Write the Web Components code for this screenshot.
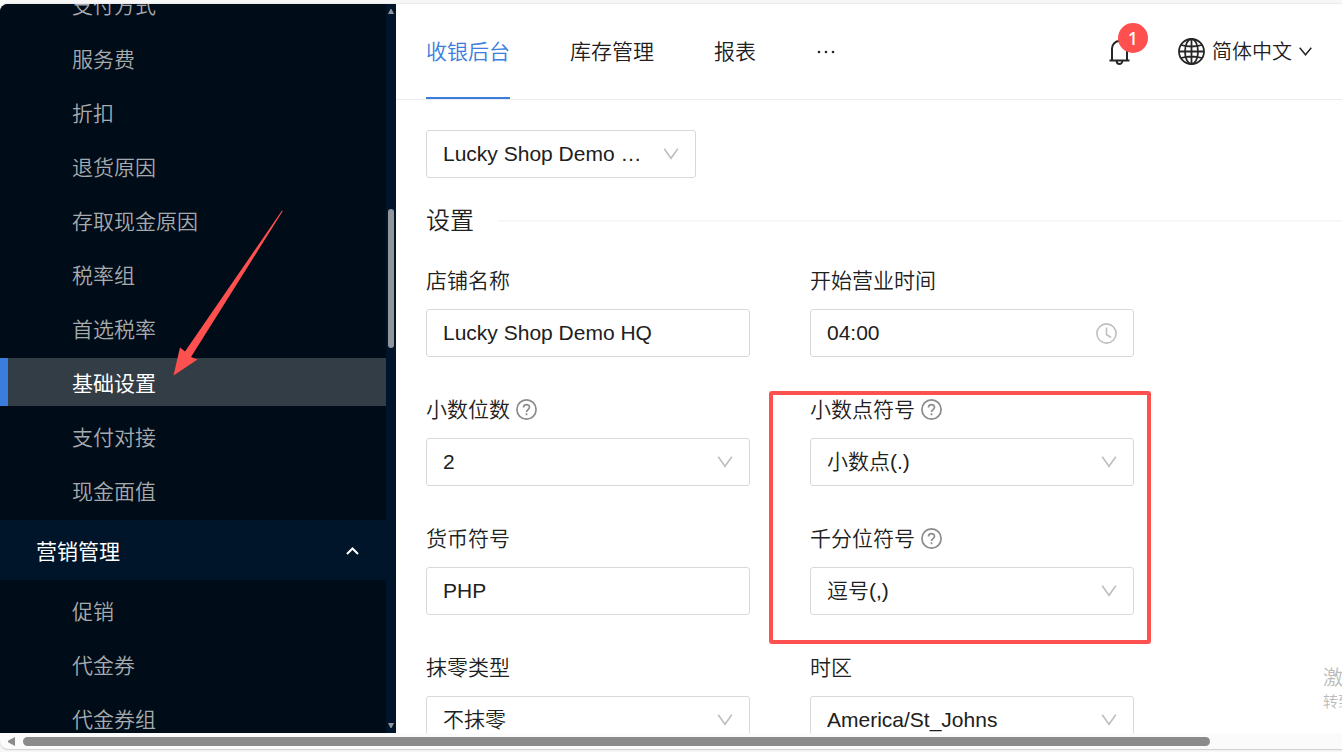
<!DOCTYPE html>
<html lang="zh-CN">
<head>
<meta charset="utf-8">
<title>基础设置</title>
<style>
    body {
        margin: 0;
        height: 100vh;
        overflow: hidden;
        background: #f7f7f7;
        color: #202020;
        font: 350 21px/32px "Liberation Sans", "Noto Sans CJK SC", sans-serif;
        --primary: #3b7ddd;
        --mark: #ff5050;
        --line: #d9d9d9;
    }
</style>
</head>
<body>

<app-shell>
    <side-menu slot="side">
        <menu-group>
            <menu-item>支付方式</menu-item>
            <menu-item>服务费</menu-item>
            <menu-item>折扣</menu-item>
            <menu-item>退货原因</menu-item>
            <menu-item>存取现金原因</menu-item>
            <menu-item>税率组</menu-item>
            <menu-item>首选税率</menu-item>
            <menu-item active>基础设置</menu-item>
            <menu-item>支付对接</menu-item>
            <menu-item>现金面值</menu-item>
        </menu-group>
        <menu-group label="营销管理">
            <menu-item>促销</menu-item>
            <menu-item>代金券</menu-item>
            <menu-item>代金券组</menu-item>
        </menu-group>
    </side-menu>

    <top-bar slot="top" count="1" lang-name="简体中文">
        <nav-tab active>收银后台</nav-tab>
        <nav-tab>库存管理</nav-tab>
        <nav-tab>报表</nav-tab>
    </top-bar>

    <drop-select name="店铺" value="Lucky Shop Demo HQ" style="width: 270px"></drop-select>

    <form-section heading="设置">
        <form-field label="店铺名称" value="Lucky Shop Demo HQ"></form-field>
        <form-field label="开始营业时间" value="04:00" type="time"></form-field>
        <form-field label="小数位数" value="2" type="select" help></form-field>
        <form-field label="小数点符号" value="小数点(.)" type="select" help></form-field>
        <form-field label="货币符号" value="PHP"></form-field>
        <form-field label="千分位符号" value="逗号(,)" type="select" help></form-field>
        <form-field label="抹零类型" value="不抹零" type="select"></form-field>
        <form-field label="时区" value="America/St_Johns" type="select"></form-field>
        <mark-box slot="mark"></mark-box>
    </form-section>

    <mark-arrow slot="over"></mark-arrow>
    <os-notice slot="over"></os-notice>
</app-shell>

<script>
// small helper, every element puts its markup in an open shadow root
class Base extends HTMLElement {
    constructor() {
        super();
        this.attachShadow({ mode: "open" });
    }
    connectedCallback() {
        this.shadowRoot.innerHTML = this.render();
    }
    attr(name) {
        return this.getAttribute(name) || "";
    }
}

// window frame: sidebar, header, content and the bottom scroll bar
class AppShell extends Base {
    render() {
        return `
<style>
    :host { display: flex; flex-direction: column; box-sizing: border-box; height: 100%; padding: 4px 0 3px; position: relative; overflow: hidden; }
    .body { display: flex; flex: 1; min-height: 0; background: #fff; border-radius: 8px 0 0 0; overflow: hidden; box-shadow: 0 0 2px #ccc; }
    .right { flex: 1; min-width: 0; display: flex; flex-direction: column; overflow: hidden; }
    main { display: flex; flex-direction: column; gap: 25px; padding: 30px 0 0 30px; }
    .bar { display: flex; align-items: center; gap: 8px; box-sizing: border-box; height: 16px; padding-left: 8px; background: #fbfbfb; border-radius: 0 0 0 8px; box-shadow: 0 1px 1px #ccc; }
    .bar svg { width: 7px; height: 9px; }
    .track { flex: 1; }
    .thumb { width: 90%; height: 9px; border-radius: 5px; background: #8b8b8b; }
</style>
<div class="body">
    <slot name="side"></slot>
    <div class="right">
        <slot name="top"></slot>
        <main><slot></slot></main>
    </div>
</div>
<div class="bar">
    <svg viewBox="0 0 7 9"><path d="M7 0v9L0 5.2v-1.4z" fill="#8b8b8b"/></svg>
    <div class="track"><div class="thumb"></div></div>
</div>
<slot name="over"></slot>`;
    }
}
customElements.define("app-shell", AppShell);

class SideMenu extends Base {
    render() {
        return `
<style>
    :host { display: flex; flex: none; width: 396px; background: #001529; overflow: hidden; }
    nav { flex: 1; margin-top: -30px; }
    .scroll { display: flex; flex-direction: column; align-items: center; width: 10px; padding: 5px 0; }
    .scroll svg { width: 6px; height: 5px; }
    .space { flex: 195; }
    .thumb { flex: 139; width: 6px; border-radius: 3px; background: #90959c; }
    .rest { flex: 375; }
</style>
<nav><slot></slot></nav>
<div class="scroll">
    <svg viewBox="0 0 6 5"><path d="M0 5h6L3.5 0h-1z" fill="#90959c"/></svg>
    <div class="space"></div>
    <div class="thumb"></div>
    <div class="rest"></div>
    <svg viewBox="0 0 6 5"><path d="M0 0h6L3.5 5h-1z" fill="#90959c"/></svg>
</div>`;
    }
}
customElements.define("side-menu", SideMenu);

class MenuGroup extends Base {
    render() {
        const head = this.attr("label") ? `
<button type="button" aria-expanded="true">${this.attr("label")}
    <svg viewBox="0 0 13 8"><path d="M1 7l5.500-5.500L12 7" fill="none" stroke="#fff" stroke-width="2"/></svg>
</button>` : "";
        return `
<style>
    :host { display: block; }
    button { display: flex; justify-content: space-between; align-items: center; width: 100%; height: 60px; padding: 3px 27px 0 36px; border: 0; background: #001529; color: #fff; font: inherit; font-weight: 400; }
    svg { width: 13px; height: 8px; margin-bottom: 2px; }
    .items { display: flex; flex-direction: column; gap: 6px; padding: 6px 0; background: #000c17; }
</style>
${head}
<div class="items"><slot></slot></div>`;
    }
}
customElements.define("menu-group", MenuGroup);

class MenuItem extends Base {
    render() {
        return `
<style>
    :host { display: block; }
    a { display: flex; align-items: center; box-sizing: border-box; height: 48px; padding: 4px 0 0 64px; border-left: 8px solid transparent; color: #a6aaae; text-decoration: none; }
    :host([active]) a { border-color: var(--primary); background: #333d45; color: #fff; font-weight: 400; }
</style>
<a href="#"><slot></slot></a>`;
    }
}
customElements.define("menu-item", MenuItem);

class TopBar extends Base {
    render() {
        return `
<style>
    :host { display: flex; flex: none; justify-content: space-between; box-sizing: border-box; height: 96px; padding: 0 30px; border-bottom: 1px solid #ebebeb; }
    nav, .tools { display: flex; }
    nav { gap: 60px; }
    .tools { align-items: center; gap: 48px; }
    button { display: flex; align-items: center; padding: 0; border: 0; background: none; color: inherit; font: inherit; }
    .more svg { width: 20px; height: 4px; }
    .bell { position: relative; }
    .bell svg { width: 21px; height: 26px; }
    .badge { position: absolute; left: 9px; top: -16px; width: 30px; height: 30px; border-radius: 50%; background: var(--mark); color: #fff; font: 500 18px/30px "Noto Sans", sans-serif; text-align: center; }
    .lang { gap: 7px; font-size: 20px; }
    .globe { width: 27px; height: 27px; }
    .down { width: 13px; height: 9px; }
</style>
<nav>
    <slot></slot>
    <button class="more" type="button" aria-label="更多">
        <svg viewBox="0 0 20 4" fill="#262626"><circle cx="3" cy="2" r="1.300"/><circle cx="10" cy="2" r="1.300"/><circle cx="17" cy="2" r="1.300"/></svg>
    </button>
</nav>
<div class="tools">
    <button class="bell" type="button" aria-label="通知">
        <svg viewBox="0 0 21 26" fill="none" stroke="#262626" stroke-width="2">
            <path d="M0.500 21.500h20M3 21.500V9.500a7.500 7.500 0 0 1 15 0v12M10.500 2V0"/>
            <path d="M7.700 22a2.800 3 0 0 0 5.600 0"/>
        </svg>
        <span class="badge">${this.attr("count")}</span>
    </button>
    <button class="lang" type="button">
        <svg class="globe" viewBox="0 0 27 27" fill="none" stroke="#262626" stroke-width="1.800">
            <circle cx="13.500" cy="13.500" r="12.500"/>
            <ellipse cx="13.500" cy="13.500" rx="6.500" ry="12.500"/>
            <path d="M13.500 1v25M1 13.500h25M3 7q10.500 3 21 0M3 20q10.500-3 21 0"/>
        </svg>
        <span>${this.attr("lang-name")}</span>
        <svg class="down" viewBox="0 0 13 9"><path d="M0.700 0.700l5.800 7 5.800-7" fill="none" stroke="#262626" stroke-width="1.500"/></svg>
    </button>
</div>`;
    }
}
customElements.define("top-bar", TopBar);

class NavTab extends Base {
    render() {
        return `
<style>
    :host { display: flex; }
    a { display: flex; align-items: center; padding-top: 2px; border-bottom: 2px solid transparent; color: inherit; text-decoration: none; white-space: nowrap; }
    :host([active]) a { border-color: var(--primary); color: var(--primary); }
</style>
<a href="#"><slot></slot></a>`;
    }
}
customElements.define("nav-tab", NavTab);

// shared look of inputs and selects
const controlStyle = `
    .box { display: grid; align-items: center; }
    .box > * { grid-area: 1 / 1; }
    .box svg { justify-self: end; margin-right: 17px; pointer-events: none; }
    input, select { appearance: none; box-sizing: border-box; width: 100%; min-width: 0; height: 48px; margin: 0; padding: 0 16px; border: 1px solid var(--line); border-radius: 3px; background: #fff; color: inherit; font: inherit; outline: 0; }
    select { padding-right: 45px; text-overflow: ellipsis; }
    .arrow { width: 16px; height: 12px; }
    .clock { width: 21px; height: 21px; }
`;
const arrowIcon = `<svg class="arrow" viewBox="0 0 16 12"><path d="M1.200 0.700l6.800 9.600 6.800-9.600" fill="none" stroke="#bfbfbf" stroke-width="1.600"/></svg>`;
const clockIcon = `<svg class="clock" viewBox="0 0 21 21" fill="none" stroke="#bfbfbf" stroke-width="1.600"><circle cx="10.500" cy="10.500" r="9.600"/><path d="M10.500 4.500v7l4.500 3"/></svg>`;
const helpIcon = `<svg class="help" viewBox="0 0 21 21" fill="none" stroke="#8c8c8c" stroke-width="1.700"><circle cx="10.500" cy="10.500" r="9.600"/><path d="M7.500 8.600C7.500 4.500 13.500 4.700 13.500 8.300c0 2.400-3 2.200-3 4.700"/><path d="M10.500 14.300v1.900"/></svg>`;

class DropSelect extends Base {
    render() {
        return `
<style>
    :host { display: block; }
    ${controlStyle}
</style>
<div class="box">
    <select aria-label="${this.attr("name")}"><option>${this.attr("value")}</option></select>
    ${arrowIcon}
</div>`;
    }
}
customElements.define("drop-select", DropSelect);

class FormField extends Base {
    render() {
        const type = this.attr("type");
        const value = this.attr("value");
        let control = `<input id="control" type="text" value="${value}">`;
        if (type == "select") {
            control = `<select id="control"><option>${value}</option></select>${arrowIcon}`;
        } else if (type == "time") {
            control += clockIcon;
        }
        return `
<style>
    :host { display: flex; flex-direction: column; gap: 12px; }
    .title { display: flex; align-items: center; gap: 6px; }
    .help { width: 21px; height: 21px; padding-bottom: 1px; }
    ${controlStyle}
</style>
<div class="title">
    <label for="control">${this.attr("label")}</label>
    ${this.hasAttribute("help") ? helpIcon : ""}
</div>
<div class="box">${control}</div>`;
    }
}
customElements.define("form-field", FormField);

class FormSection extends Base {
    render() {
        return `
<style>
    :host { display: block; }
    h2 { display: flex; align-items: center; gap: 24px; margin: 0 0 26px; font-size: 24px; line-height: 36px; font-weight: inherit; }
    h2::after { content: ""; flex: 1; height: 2px; background: #f7f7f7; }
    .grid { position: relative; display: grid; grid-template-columns: repeat(auto-fill, 324px); max-width: 800px; gap: 37px 60px; }
</style>
<h2>${this.attr("heading")}</h2>
<div class="grid"><slot></slot><slot name="mark"></slot></div>`;
    }
}
customElements.define("form-section", FormSection);

// red frame round the separator fields
class MarkBox extends Base {
    render() {
        return `
<style>
    :host { position: absolute; left: 343px; top: 126px; width: 382px; height: 253px; box-sizing: border-box; border: 4px solid var(--mark); border-radius: 3px; pointer-events: none; }
</style>`;
    }
}
customElements.define("mark-box", MarkBox);

// red arrow that points at the active menu item
class MarkArrow extends Base {
    render() {
        return `
<style>
    :host { position: absolute; left: 173px; top: 210px; pointer-events: none; }
    svg { display: block; width: 110px; height: 166px; fill: var(--mark); }
</style>
<svg viewBox="0 0 110 166"><path d="M0.500 165.500L7 137.500l5 4L109 0.500l0.800 0.500L18 147l6.500 2.500z"/></svg>`;
    }
}
customElements.define("mark-arrow", MarkArrow);

class OsNotice extends Base {
    render() {
        return `
<style>
    :host { position: absolute; right: 0; top: 664px; width: 19px; overflow: hidden; color: #bbb; white-space: nowrap; pointer-events: none; }
    p { margin: 0; font-size: 20px; line-height: 28px; }
    small { display: block; font-size: 15px; line-height: 20px; }
</style>
<p>激活</p>
<small>转到</small>`;
    }
}
customElements.define("os-notice", OsNotice);
</script>
</body>
</html>
